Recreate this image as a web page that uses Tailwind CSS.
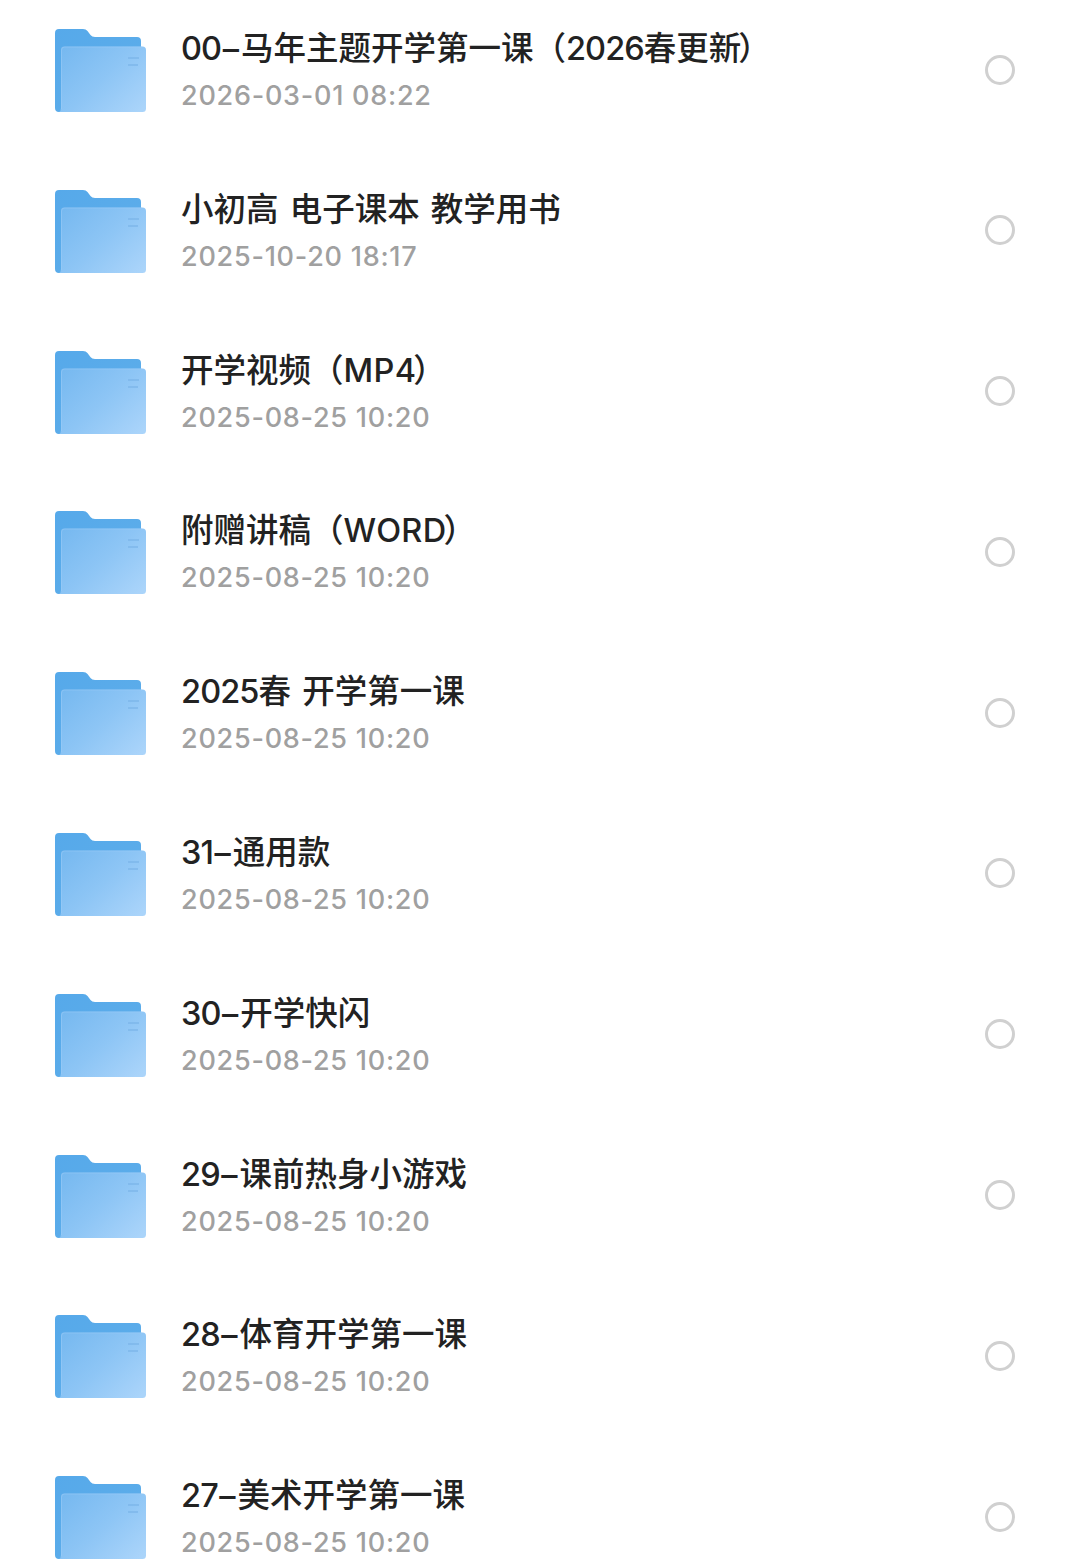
<!DOCTYPE html>
<html lang="zh-CN">
<head>
  <meta charset="UTF-8" />
  <meta name="viewport" content="width=device-width, initial-scale=1.0"/>
  <title>文件列表</title>
  <script src="https://cdn.jsdelivr.net/npm/@tailwindcss/browser@4"></script>
</head>
<body class="bg-white h-[1564px] overflow-hidden font-['Inter','Noto_Sans_CJK_SC',sans-serif]">

  <!-- Gradients shared by the folder icons -->
  <svg class="absolute size-0">
    <defs>
      <linearGradient id="back" x1="0" y1="0" x2="1" y2="1">
        <stop offset="0" stop-color="#56a9ea"/>
        <stop offset="1" stop-color="#5eaeea"/>
      </linearGradient>
      <linearGradient id="front" x1="0" y1="0.1" x2="1" y2="0.9">
        <stop offset="0" stop-color="#77b9f0"/>
        <stop offset="0.5" stop-color="#8dc5f5"/>
        <stop offset="1" stop-color="#aad4fa"/>
      </linearGradient>
    </defs>
  </svg>

  <ul id="files"></ul>

  <script>
    const files = [
      { name: "00–马年主题开学第一课（2026春更新）", date: "2026-03-01 08:22" },
      { name: "小初高 电子课本 教学用书", date: "2025-10-20 18:17" },
      { name: "开学视频（MP4）", date: "2025-08-25 10:20" },
      { name: "附赠讲稿（WORD）", date: "2025-08-25 10:20" },
      { name: "2025春 开学第一课", date: "2025-08-25 10:20" },
      { name: "31–通用款", date: "2025-08-25 10:20" },
      { name: "30–开学快闪", date: "2025-08-25 10:20" },
      { name: "29–课前热身小游戏", date: "2025-08-25 10:20" },
      { name: "28–体育开学第一课", date: "2025-08-25 10:20" },
      { name: "27–美术开学第一课", date: "2025-08-25 10:20" }
    ];

    // Even out the spacing where digits and letters meet the Chinese text
    function formatName(name) {
      return name
        .replace(/[0-9]{2,}/g, '<span class="tracking-[-0.9px]">$&</span>')
        .replace(/[A-Z]+[0-9]?/g, '<span class="tracking-[0.3px]">$&</span>')
        .replace(/–/g, '<span class="ml-[1.5px] mr-[2px]">–</span>')
        .replace(/）/g, '<span class="-ml-[3px]">）</span>');
    }

    document.getElementById('files').innerHTML = files.map(file => `
      <li class="flex items-start h-[160.8px] pl-[55px] pr-[65px] pt-[29px]">
        <svg class="w-[91px] h-[84px] shrink-0" viewBox="0 0 91 84">
          <path fill="url(#back)" d="M0 4Q0 0 4 0H28Q31 0 32.500 2L35.500 6Q37 8 40 8H82Q86 8 86 12V83H4Q0 83 0 79Z"/>
          <path fill="url(#front)" d="M6 20.500Q6 17.500 9 17.500H87.500Q91 17.500 91 21V79.500Q91 83 87.500 83H4Q6 82 6 79Z"/>
          <path fill="none" stroke="#9dcdf7" stroke-opacity=".5" d="M6.500 80V21Q6.500 18 9.500 18H87"/>
          <path stroke="#78b3e8" stroke-opacity=".6" stroke-width="2" d="M73 29H84M73 36H83"/>
        </svg>
        <div class="ml-[35px] flex-1 whitespace-nowrap">
          <p class="h-10 leading-10 text-[32.5px] font-medium [word-spacing:2.5px] text-[#222]">${formatName(file.name)}</p>
          <p class="mt-[9px] h-9 leading-9 text-[27px] font-medium tracking-[0.75px] text-[#a0a0a0]">${file.date}</p>
        </div>
        <span class="mt-[25.500px] size-[30px] rounded-full border-[3px] border-[#d0d0d0]"></span>
      </li>
    `).join('');
  </script>
</body>
</html>
